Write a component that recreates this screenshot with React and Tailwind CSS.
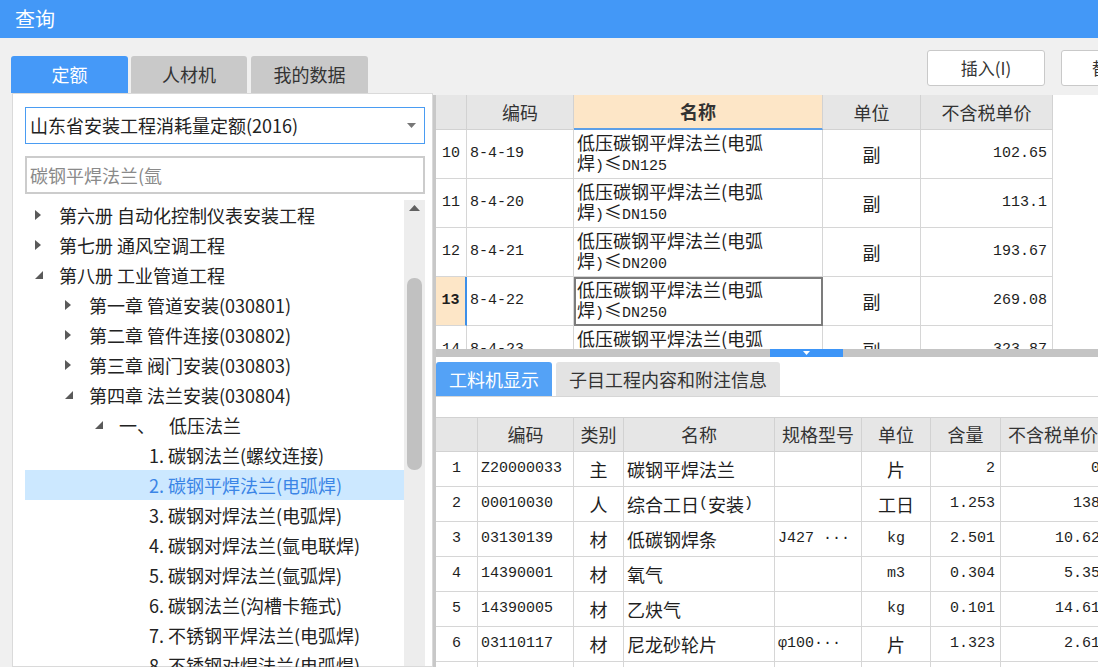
import React from "react";

const tree = [
  { l: 0, t: "第六册 自动化控制仪表安装工程", a: "c" },
  { l: 0, t: "第七册 通风空调工程", a: "c" },
  { l: 0, t: "第八册 工业管道工程", a: "e" },
  { l: 1, t: "第一章 管道安装(030801)", a: "c" },
  { l: 1, t: "第二章 管件连接(030802)", a: "c" },
  { l: 1, t: "第三章 阀门安装(030803)", a: "c" },
  { l: 1, t: "第四章 法兰安装(030804)", a: "e" },
  { l: 2, t: "一、", t2: "低压法兰", a: "e" },
  { l: 3, t: "1. 碳钢法兰(螺纹连接)" },
  { l: 3, t: "2. 碳钢平焊法兰(电弧焊)", sel: true },
  { l: 3, t: "3. 碳钢对焊法兰(电弧焊)" },
  { l: 3, t: "4. 碳钢对焊法兰(氩电联焊)" },
  { l: 3, t: "5. 碳钢对焊法兰(氩弧焊)" },
  { l: 3, t: "6. 碳钢法兰(沟槽卡箍式)" },
  { l: 3, t: "7. 不锈钢平焊法兰(电弧焊)" },
  { l: 3, t: "8. 不锈钢对焊法兰(电弧焊)" },
];

const indent = ["pl-0", "pl-[30px]", "pl-[60px]", "pl-[90px]"];

const upper = [
  ["10", "8-4-19", "DN125", "102.65"],
  ["11", "8-4-20", "DN150", "113.1"],
  ["12", "8-4-21", "DN200", "193.67"],
  ["13", "8-4-22", "DN250", "269.08"],
  ["14", "8-4-23", "DN300", "323.87"],
];

const lower = [
  ["1", "Z20000033", "主", "碳钢平焊法兰", "", "片", "2", "0"],
  ["2", "00010030", "人", "综合工日(安装)", "", "工日", "1.253", "138"],
  ["3", "03130139", "材", "低碳钢焊条", "J427 ···", "kg", "2.501", "10.62"],
  ["4", "14390001", "材", "氧气", "", "m3", "0.304", "5.35"],
  ["5", "14390005", "材", "乙炔气", "", "kg", "0.101", "14.61"],
  ["6", "03110117", "材", "尼龙砂轮片", "φ100···", "片", "1.323", "2.61"],
  ["", "", "", "", "", "", "", ""],
];

// SimSun-like: latin runs narrower than the CJK glyphs
function mix(s) {
  return s.split(/([\x20-\x7e\u00b7\u0370-\u03ff]+)/).map((p, i) =>
    /^[\x20-\x7e\u00b7\u0370-\u03ff]+$/.test(p) ? (
      <span key={i} className="font-['Liberation_Mono',monospace] text-[15px]">{p}</span>
    ) : (
      p
    )
  );
}

function Arrow({ kind }) {
  if (kind === "c")
    return (
      <svg width="7" height="10" viewBox="0 0 7 10">
        <polygon points="0,0 6,5 0,10" fill="#5a5a5a" />
      </svg>
    );
  if (kind === "e")
    return (
      <svg width="8" height="8" viewBox="0 0 8 8">
        <polygon points="8,0 8,8 0,8" fill="#5a5a5a" />
      </svg>
    );
  return null;
}

function LeftPanel() {
  return (
    <div className="w-[433px] shrink-0 flex flex-col pt-[18px]">
      <div className="flex h-[37px] pl-[11px] text-[18px]">
        <div className="w-[117px] rounded-t-[3px] bg-[#4599f8] text-white flex items-center justify-center">定额</div>
        <div className="w-[116px] ml-[3px] rounded-t-[3px] bg-[#c9c9c9] text-[#333] flex items-center justify-center">人材机</div>
        <div className="w-[117px] ml-[4px] rounded-t-[3px] bg-[#c9c9c9] text-[#333] flex items-center justify-center">我的数据</div>
      </div>
      <div className="flex-1 min-h-0 ml-[12px] bg-white border border-[#dadada] pt-[13px] pl-[12px] pr-[7px] flex flex-col">
        <div className="h-[37px] border border-[#4a9cf2] flex items-center pl-[4px] pr-[8px] text-[18px] text-[#222]">
          <span className="flex-1">山东省安装工程消耗量定额(2016)</span>
          <svg width="9" height="5" viewBox="0 0 9 5">
            <polygon points="0,0 9,0 4.5,5" fill="#777" />
          </svg>
        </div>
        <div className="h-[38px] mt-[12px] border-2 border-[#cccccc] flex items-center pl-[3px] text-[18px] text-[#8a8a8a]">
          碳钢平焊法兰(氩
        </div>
        <div className="flex mt-[6px] flex-1 min-h-0">
          <div className="w-[379px] text-[18px] text-[#222]">
            {tree.map((r, i) => (
              <div
                key={i}
                className={
                  "h-[30px] flex items-center " +
                  indent[r.l] +
                  (r.sel ? " bg-[#cce8ff] text-[#3b85e6]" : "")
                }
              >
                <div className="w-[34px] shrink-0 pl-[10px] flex items-center">
                  <Arrow kind={r.a} />
                </div>
                <span className="whitespace-pre">{r.t}</span>
                {r.t2 && <span className="ml-[14px]">{r.t2}</span>}
              </div>
            ))}
          </div>
          <div className="w-[21px] bg-[#ededed] flex flex-col items-center">
            <div className="h-[16px] flex items-center">
              <svg width="11" height="6" viewBox="0 0 11 6">
                <polygon points="0,6 11,6 5.5,0" fill="#606060" />
              </svg>
            </div>
            <div className="mt-[62px] w-[15px] h-[192px] rounded-[7px] bg-[#c1c1c1]" />
          </div>
        </div>
      </div>
    </div>
  );
}

function UpperTable() {
  return (
    <div className="h-[254px] bg-white border-l-[3px] border-[#c8c8c8] overflow-hidden">
      <div className="flex h-[35px] text-[18px] text-[#333]">
        <div className="w-[31px] bg-[#e6e6e6] border-r border-b border-[#d2d2d2]" />
        <div className="w-[107px] bg-[#e6e6e6] border-r border-b border-[#d2d2d2] flex items-center justify-center">编码</div>
        <div className="w-[249px] bg-[#fde6c7] border-r border-b-2 border-[#d2d2d2] border-b-[#5d9fe6] flex items-center justify-center font-bold">名称</div>
        <div className="w-[98px] bg-[#e6e6e6] border-r border-b border-[#d2d2d2] flex items-center justify-center">单位</div>
        <div className="w-[132px] bg-[#e6e6e6] border-r border-b border-[#d2d2d2] flex items-center justify-center">不含税单价</div>
      </div>
      {upper.map((r) => {
        const cur = r[0] === "13";
        return (
          <div key={r[0]} className="flex h-[49px] text-[18px] text-[#1e1e1e]">
            <div
              className={
                "w-[31px] border-r border-b border-[#d6d6d6] flex items-center justify-center font-['Liberation_Mono',monospace] text-[15px] " +
                (cur ? "bg-[#fde6c7] font-bold border-r-2 border-r-[#3d8fe8]" : "")
              }
            >
              {r[0]}
            </div>
            <div className="w-[107px] border-r border-b border-[#d6d6d6] flex items-center pl-[3px] font-['Liberation_Mono',monospace] text-[15px]">
              {r[1]}
            </div>
            <div
              className={
                "w-[249px] border-r border-b border-[#d6d6d6] flex flex-col justify-center pl-[3px] leading-[20px] " +
                (cur ? "outline-2 outline-[#7c7c7c] -outline-offset-2" : "")
              }
            >
              <div>低压碳钢平焊法兰(电弧</div>
              <div>{mix("焊)≤" + r[2])}</div>
            </div>
            <div className="w-[98px] border-r border-b border-[#d6d6d6] flex items-center justify-center">副</div>
            <div className="w-[132px] border-r border-b border-[#d6d6d6] flex items-center justify-end pr-[5px] font-['Liberation_Mono',monospace] text-[15px]">
              {r[3]}
            </div>
          </div>
        );
      })}
    </div>
  );
}

const lw = ["w-[42px]", "w-[96px]", "w-[50px]", "w-[151px]", "w-[87px]", "w-[69px]", "w-[70px]", "w-[105px]"];
const lAlign = [
  "justify-center",
  "justify-start pl-[3px]",
  "justify-center",
  "justify-start pl-[3px]",
  "justify-start pl-[3px]",
  "justify-center",
  "justify-end pr-[5px]",
  "justify-end pr-[5px]",
];

function LowerTable() {
  const head = ["", "编码", "类别", "名称", "规格型号", "单位", "含量", "不含税单价"];
  return (
    <div className="flex-1 min-h-0 bg-white border-l-[3px] border-[#c8c8c8] overflow-hidden">
      <div className="h-[5px]" />
      <div className="flex h-[35px] text-[18px] border-b border-[#d6d6d6]">
        <div className="w-[116px] rounded-t-[3px] bg-[#54a2f6] text-white flex items-center justify-center">工料机显示</div>
        <div className="w-[224px] ml-[4px] rounded-t-[3px] bg-[#e3e3e3] text-[#333] flex items-center justify-center">子目工程内容和附注信息</div>
      </div>
      <div className="h-[20px]" />
      <div className="w-[700px]">
        <div className="flex h-[35px] text-[18px] text-[#333] bg-[#e6e6e6]">
          {head.map((h, i) => (
            <div key={i} className={lw[i] + " shrink-0 border-r border-b border-t border-[#d2d2d2] flex items-center justify-center whitespace-nowrap overflow-hidden"}>
              {h}
            </div>
          ))}
        </div>
        {lower.map((r, ri) => (
          <div key={ri} className="flex h-[35px] text-[18px] text-[#1e1e1e]">
            {r.map((c, i) => (
              <div key={i} className={lw[i] + " " + lAlign[i] + " shrink-0 border-r border-b border-[#d6d6d6] flex items-center whitespace-pre"}>
                {mix(c)}
              </div>
            ))}
          </div>
        ))}
      </div>
    </div>
  );
}

function RightPanel() {
  return (
    <div className="flex-1 min-w-0 flex flex-col">
      <div className="h-[57px] shrink-0 flex items-start pt-[12px] pl-[494px] overflow-hidden text-[17px] text-[#333]">
        <div className="w-[118px] h-[36px] shrink-0 bg-white border border-[#c9c9c9] rounded-[3px] flex items-center justify-center">插入(I)</div>
        <div className="w-[118px] h-[36px] shrink-0 ml-[16px] bg-white border border-[#c9c9c9] rounded-[3px] flex items-center justify-center">替换(R)</div>
      </div>
      <UpperTable />
      <div className="h-[8px] shrink-0 bg-[#c4c4c4] border-l-[3px] border-[#c8c8c8] pl-[334px]">
        <div className="w-[73px] h-full bg-[#3d95f7] flex items-center justify-center">
          <svg width="7" height="4" viewBox="0 0 7 4">
            <polygon points="0,0 7,0 3.5,4" fill="#fff" />
          </svg>
        </div>
      </div>
      <LowerTable />
    </div>
  );
}

export default function App() {
  return (
    <div className="w-[1098px] h-[667px] overflow-hidden bg-[#f0f0f0] flex flex-col font-['Noto_Sans_CJK_SC',sans-serif]">
      <div className="h-[38px] shrink-0 bg-[#4398f7] text-white text-[20px] pl-[15px] flex items-center">查询</div>
      <div className="flex flex-1 min-h-0">
        <LeftPanel />
        <RightPanel />
      </div>
    </div>
  );
}
